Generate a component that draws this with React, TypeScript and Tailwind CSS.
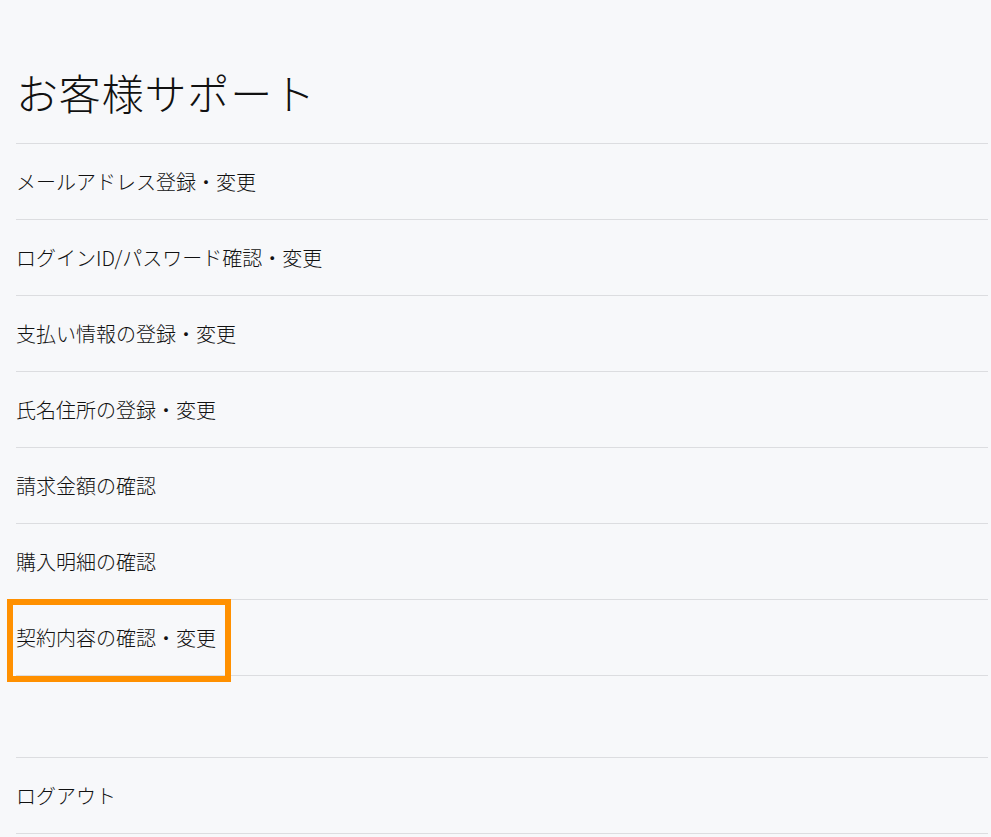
const items = [
  "メールアドレス登録・変更",
  "ログインID/パスワード確認・変更",
  "支払い情報の登録・変更",
  "氏名住所の登録・変更",
  "請求金額の確認",
  "購入明細の確認",
  "契約内容の確認・変更",
];

export default function App() {
  return (
    <div
      className="min-h-[837px] bg-[#f7f8fa] pl-4 pr-[3px] font-light text-[#111]"
      style={{ fontFamily: '"Noto Sans CJK JP", "Noto Sans", sans-serif' }}
    >
      <h1 className="pt-[64px] pb-[23px] text-[42px] leading-[56px] font-light tracking-[0.02em]">
        お客様サポート
      </h1>
      <ul className="border-b border-[#dcdde0]">
        {items.map((label, i) => (
          <li key={i} className="relative border-t border-[#dcdde0]">
            <a href="#" className="flex h-[75px] items-center text-[20px] leading-none">
              {label}
            </a>
            {i === items.length - 1 && (
              <span className="pointer-events-none absolute left-[-9px] top-[-1px] h-[83px] w-[224px] border-[6px] border-[#ff9000]" />
            )}
          </li>
        ))}
      </ul>
      <div className="mt-[81px] border-t border-b border-[#dcdde0]">
        <a href="#" className="flex h-[75px] items-center text-[20px] leading-none">
          ログアウト
        </a>
      </div>
    </div>
  );
}
